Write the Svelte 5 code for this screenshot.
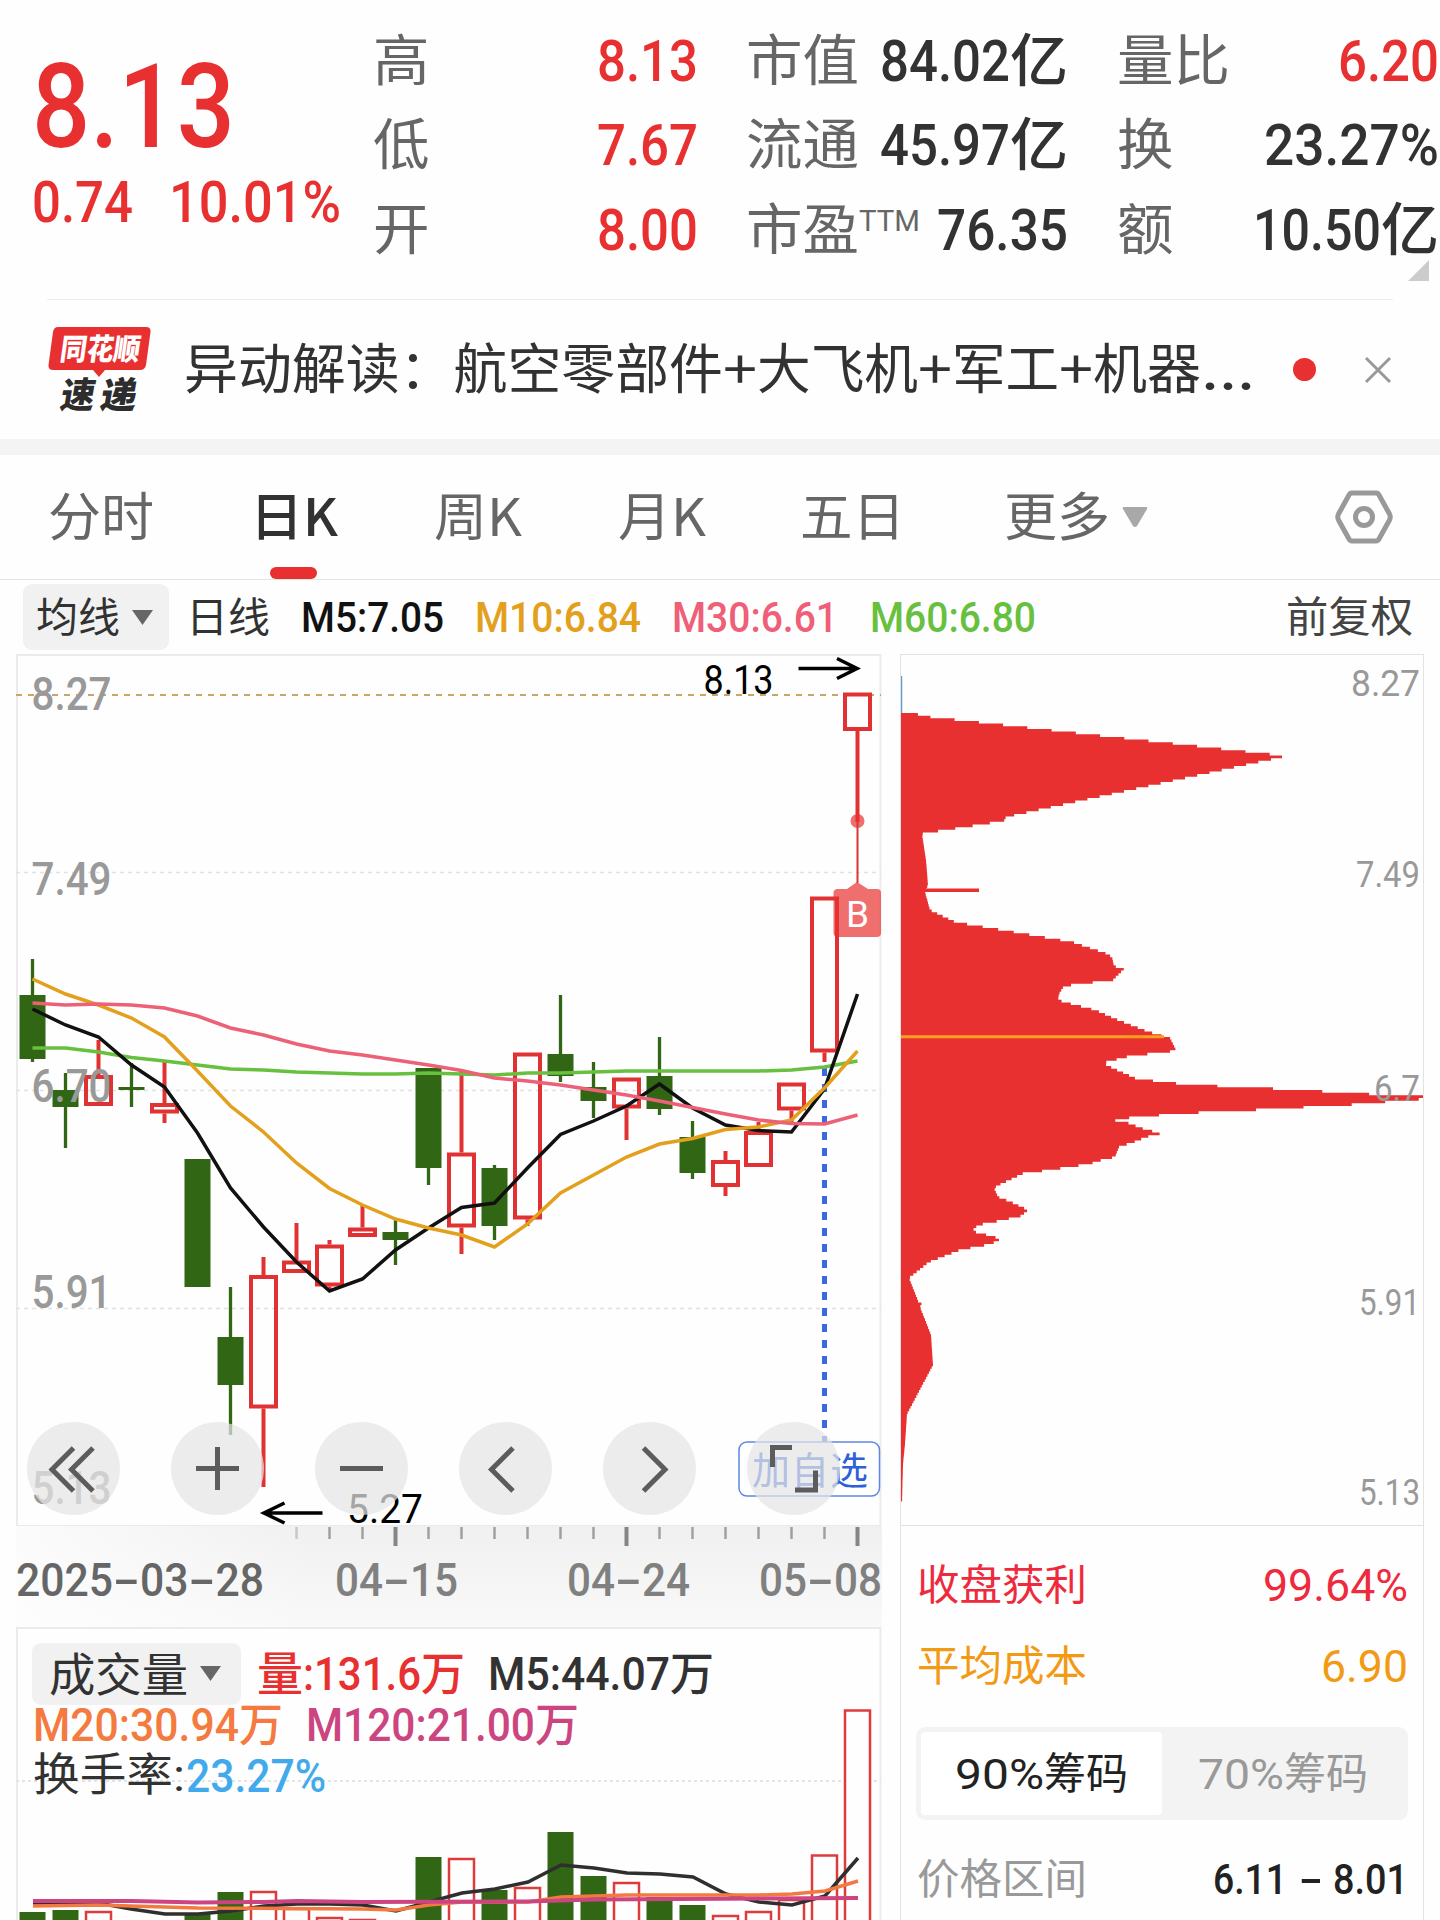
<script lang="ts">
	type Run = [text: string, width: number];
	type Candle = { up: boolean; high: number; top: number; bottom: number; low: number };

	const stats: { label: string; note?: string; value: Run[]; tone?: string }[][] = [
		[
			{ label: '高', value: [['8.13', 101]], tone: 'up' },
			{ label: '低', value: [['7.67', 101]], tone: 'up' },
			{ label: '开', value: [['8.00', 101]], tone: 'up' },
		],
		[
			{ label: '市值', value: [['84.02', 130], ['亿', 58]] },
			{ label: '流通', value: [['45.97', 130], ['亿', 58]] },
			{ label: '市盈', note: 'TTM', value: [['76.35', 131]] },
		],
		[
			{ label: '量比', value: [['6.20', 101]], tone: 'up' },
			{ label: '换', value: [['23.27%', 175]] },
			{ label: '额', value: [['10.50', 128], ['亿', 58]] },
		],
	];

	const headline: Run[] = [
		['异动解读：航空零部件', 539],
		['+', 34],
		['大飞机', 161],
		['+', 34],
		['军工', 107],
		['+', 34],
		['机器', 108],
		['...', 54],
	];

	const tabs: { runs: Run[]; gap: number }[] = [
		{ runs: [['分时', 106]], gap: 0 },
		{ runs: [['日', 53], ['K', 35]], gap: 96 },
		{ runs: [['周', 53], ['K', 35]], gap: 96 },
		{ runs: [['月', 53], ['K', 35]], gap: 96 },
		{ runs: [['五日', 105]], gap: 94 },
		{ runs: [['更多', 106]], gap: 99 },
	];

	let activeTab = $state(1);
	let chipRange = $state(90);

	// candle geometry, in screen units
	const X0 = 32.5;
	const STEP = 33;
	const cx = (i: number) => X0 + i * STEP;

	const c = (up: number, high: number, top: number, bottom: number, low: number): Candle => ({
		up: up === 1,
		high,
		top,
		bottom,
		low,
	});
	const candles: Candle[] = [
		c(0, 959, 995, 1059, 1062),
		c(0, 1073, 1090, 1107, 1148),
		c(1, 1040, 1075, 1106, 1106),
		c(0, 1063, 1087, 1090, 1107),
		c(1, 1062, 1103, 1113.5, 1123),
		c(0, 1159, 1159, 1287, 1287),
		c(0, 1287, 1337, 1385, 1435),
		c(1, 1257, 1275, 1408.5, 1487),
		c(1, 1223, 1260.5, 1273, 1273),
		c(1, 1240, 1244.5, 1286.5, 1290),
		c(1, 1205, 1227.5, 1237, 1237),
		c(0, 1220, 1232, 1240, 1265),
		c(0, 1068, 1068, 1168, 1185),
		c(1, 1070, 1152.5, 1227.5, 1254),
		c(0, 1165, 1168, 1226, 1240),
		c(1, 1052.5, 1052.5, 1219.5, 1226),
		c(0, 995, 1054, 1076, 1082),
		c(0, 1062, 1087, 1101, 1118),
		c(1, 1077.5, 1077.5, 1108.5, 1140),
		c(0, 1037, 1076, 1109, 1115),
		c(0, 1121, 1137, 1173, 1179),
		c(1, 1151, 1160, 1187, 1196),
		c(1, 1122, 1131, 1167, 1167),
		c(1, 1082.5, 1082.5, 1110.5, 1122),
		c(1, 896.5, 896.5, 1052.5, 1062),
		c(1, 692.5, 692.5, 731, 822),
	];

	const averages = [
		{ cls: 'ma60', ys: [1048, 1048, 1052, 1057.5, 1061, 1065, 1069, 1070, 1072, 1073, 1074, 1074, 1073, 1074, 1075, 1073, 1073, 1072, 1071, 1071, 1071, 1071, 1071, 1070, 1067, 1061] },
		{ cls: 'ma5', ys: [1009, 1025, 1037, 1065, 1087, 1133, 1188, 1227, 1262, 1291, 1279, 1250, 1228, 1207.5, 1203, 1168, 1134.5, 1121, 1106, 1084, 1108, 1125, 1130.5, 1132, 1089, 994] },
		{ cls: 'ma10', ys: [979, 994, 1005, 1018, 1037, 1071, 1106, 1132, 1163, 1188.5, 1205, 1219, 1228, 1235, 1247, 1224, 1193, 1175, 1157, 1144, 1138.5, 1129.5, 1127, 1120, 1088, 1051] },
		{ cls: 'ma30', ys: [1003, 1005, 1004, 1005, 1008, 1016, 1028, 1035, 1044, 1051, 1055, 1060, 1065, 1070.5, 1078, 1081, 1085, 1090, 1095, 1101, 1107.5, 1114, 1120, 1123.5, 1124, 1115] },
	];
	const polyline = (ys: number[]) => ys.map((y, i) => `${cx(i)},${y}`).join(' ');

	const priceLabels = [
		{ text: '8.27', y: 710 },
		{ text: '7.49', y: 895 },
		{ text: '6.70', y: 1102 },
		{ text: '5.91', y: 1308 },
		{ text: '5.13', y: 1504 },
	];

	const buttonX = [73.5, 217.5, 361.5, 505.5, 649.5, 793.5];

	// volume bars: top edge, 0 when the bar is below the visible area
	const volumes: [up: number, top: number][] = [
		[0, 1912], [0, 1910], [1, 1912], [0, 0], [0, 0], [0, 1914], [0, 1892], [1, 1892], [1, 1909],
		[1, 1918], [1, 1920], [0, 0], [0, 1857], [1, 1859], [0, 1890], [1, 1888], [0, 1832], [0, 1876],
		[1, 1883], [0, 1897], [0, 1905], [1, 1916], [1, 1912], [1, 1900], [1, 1855.5], [1, 1710.5],
	];
	const volumeLines = [
		{ cls: 'vol5', points: '33,1903 98,1903 131,1909 165,1914 198,1914 231,1911 264,1906 297,1904 330,1904 363,1905 396,1911 429,1902 462,1893 495,1889 528,1882 561,1865 594,1868 627,1873 660,1874 693,1877 726,1894 759,1902 792,1905 825,1896 858,1858' },
		{ cls: 'vol20', points: '33,1906 98,1905 198,1908 363,1909 396,1910 429,1905 462,1902 528,1902 561,1897 627,1895 759,1895 792,1894 825,1891 858,1881' },
		{ cls: 'vol120', points: '33,1901 132,1901 198,1902.5 264,1902 297,1901 363,1902 528,1901.5 594,1899.5 858,1898' },
	];

	// chip distribution outline as [y, x]
	const chips = [
		[713, 902], [715, 926], [716.5, 926], [755.5, 1282], [757.5, 1282], [760, 1268], [817, 1006], [821, 1004], [833, 926], [834, 922],
		[860, 926], [885, 928], [892, 925], [910, 930], [922, 955], [942, 1072], [948, 1090],
		[953, 1105], [957, 1112], [966, 1114], [969, 1124], [974, 1119], [980, 1113], [986, 1064],
		[994, 1059], [1000, 1058], [1003, 1068], [1010, 1095], [1020, 1118], [1032, 1149],
		[1038, 1170], [1050, 1176], [1052, 1168], [1056, 1130], [1063, 1103], [1066, 1108],
		[1079, 1137], [1082, 1165], [1084.5, 1185], [1087, 1238], [1089.5, 1290], [1092, 1334],
		[1094.5, 1378], [1096, 1423], [1098.5, 1423], [1100, 1415], [1102.5, 1377], [1105.5, 1341], [1108, 1288],
		[1111, 1238], [1113, 1188], [1116, 1149], [1118, 1128], [1121, 1113], [1123, 1128],
		[1129, 1144], [1133.5, 1161], [1137, 1146], [1141, 1137], [1147, 1119], [1157, 1115],
		[1161, 1098], [1164, 1090], [1171, 1042], [1173, 1024], [1184, 1001], [1188, 994],
		[1197, 998], [1202, 1011], [1210, 1028], [1216, 1021], [1221, 999], [1225, 978], [1231, 972],
		[1236, 991], [1239, 1001], [1244, 991], [1250, 960], [1262, 929], [1278, 909], [1302, 918.5],
		[1304, 922], [1307, 920], [1335, 931], [1365, 933], [1414, 907], [1444, 905], [1464, 903],
		[1503, 902],
	];
	const chipAt = (y: number) => {
		const i = chips.findIndex((p) => p[0] >= y);
		if (i <= 0) return chips[0][1];
		const [y0, x0] = chips[i - 1];
		const [y1, x1] = chips[i];
		return x0 + ((x1 - x0) * (y - y0)) / (y1 - y0);
	};
	const TICK = 2.655;
	let chipPath = 'M900.5 713';
	for (let y = 713; y < 1500; y += TICK) {
		chipPath += `H${chipAt(y + TICK / 2).toFixed(1)}v${TICK}`;
	}
	chipPath += 'H900.5Z';

	const chipLabels: [text: string, y: number, width: number][] = [
		['8.27', 695.5, 69],
		['7.49', 886.5, 64],
		['6.7', 1100.5, 46],
		['5.91', 1314.5, 61],
		['5.13', 1505, 61],
	];

	const total = (runs: Run[]) => runs.reduce((sum, r) => sum + r[1], 0);
	const place = (runs: Run[]) => {
		let x = 0;
		return runs.map(([text, width]) => {
			const at = x;
			x += width;
			return { text, width, x: at };
		});
	};
</script>

<!-- one line of text whose runs are condensed to the given widths -->
{#snippet fit(runs: Run[], size: number)}
	<svg class="fit" width={total(runs)} height={size} font-size={size}>
		<text y={size * 0.86}>{#each place(runs) as r}<tspan x={r.x} textLength={r.width} lengthAdjust="spacingAndGlyphs">{r.text}</tspan>{/each}</text>
	</svg>
{/snippet}

<div class="screen">
	<header class="quote">
		<div class="price din">
			{@render fit([['8.13', 203]], 117)}
			<div class="change">
				{@render fit([['0.74', 101]], 57)}
				{@render fit([['10.01%', 172]], 57)}
			</div>
		</div>
		{#each stats as column}
			<div class="column">
				{#each column as item}
					<div class="stat">
						<span class="stat-label">
							{@render fit([[item.label, item.label.length * 56.5]], 55)}
							{#if item.note}
								<span class="note">{@render fit([[item.note, 61]], 29)}</span>
							{/if}
						</span>
						<span class="din {item.tone ?? 'plain'}">{@render fit(item.value, 57)}</span>
					</div>
				{/each}
			</div>
		{/each}
		<svg class="corner" width="22" height="21"><path d="M0 21 21 0V21Z" /></svg>
	</header>

	<section class="news">
		<svg class="logo" width="104" height="86" viewBox="48 327 104 86">
			<path class="logo-bubble" d="M58 327H146Q151 327 150.500 332L146 365Q145 370 140 370H105L99 377L93 370H53Q48 370 48.500 365L53 332Q54 327 58 327Z" />
			<text class="logo-name" transform="translate(59 360) skewX(-8)" textLength="80" lengthAdjust="spacingAndGlyphs">同花顺</text>
			<text class="logo-word" transform="translate(59 408) skewX(-10)" textLength="34" lengthAdjust="spacingAndGlyphs">速</text>
			<text class="logo-word" transform="translate(99 408) skewX(-10)" textLength="36" lengthAdjust="spacingAndGlyphs">递</text>
		</svg>
		<div class="headline">{@render fit(headline, 54)}</div>
		<span class="unread"></span>
		<svg class="close" width="28" height="28"><path d="M2 2 26 26M26 2 2 26" /></svg>
	</section>

	<nav class="tabs">
		{#each tabs as tab, i}
			<button
				type="button"
				class="tab"
				class:active={i === activeTab}
				style:margin-left="{tab.gap}px"
				onclick={() => (activeTab = i)}
			>
				{@render fit(tab.runs, 52)}
			</button>
		{/each}
		<svg class="caret" width="26" height="22"><path d="M2 1H24Q26 1 25 3L15 20Q13 22 11 20L1 3Q0 1 2 1Z" /></svg>
		<svg class="settings" width="58" height="54" viewBox="0 0 58 54">
			<path d="M17 3H41Q43 3 44 5L54.500 24Q56 27 54.500 30L44 49Q43 51 41 51H17Q15 51 14 49L3.500 30Q2 27 3.500 24L14 5Q15 3 17 3Z" />
			<circle cx="29" cy="27" r="8.500" />
		</svg>
	</nav>

	<div class="legend">
		<span class="chip">
			{@render fit([['均线', 84]], 41)}
			<svg class="chip-caret" width="21" height="15"><path d="M0 0H21L10.500 15Z" /></svg>
		</span>
		<span class="period">{@render fit([['日线', 84]], 41)}</span>
		<span class="din m5">{@render fit([['M5:7.05', 143]], 42)}</span>
		<span class="din m10">{@render fit([['M10:6.84', 166]], 42)}</span>
		<span class="din m30">{@render fit([['M30:6.61', 166]], 42)}</span>
		<span class="din m60">{@render fit([['M60:6.80', 166]], 42)}</span>
		<span class="adjust">{@render fit([['前复权', 127]], 42)}</span>
	</div>

	<main class="charts">
		<div class="left">
			<svg class="kline" width="866" height="872" viewBox="16 654 866 872">
				<rect class="frame" x="17" y="655" width="863.500" height="871" />
				<path class="grid" d="M16 872.500H881M16 1090.500H881M16 1308.500H881" />
				<path class="last-price" d="M16 695H881" />
				<path class="added" d="M824.500 1068V1442" />
				<rect class="added-box" x="739" y="1442" width="140.500" height="54" rx="8" />
				<text class="added-text" x="752" y="1483.500" textLength="116">加自选</text>

				{#each candles as k, i}
					{#if k.up}
						<path class="wick up" d="M{cx(i)} {k.high}V{k.top}M{cx(i)} {k.bottom}V{k.low}" />
						<rect class="body up" x={cx(i) - 12.5} y={k.top + 2} width="25" height={k.bottom - k.top - 4} />
					{:else}
						<path class="wick down" d="M{cx(i)} {k.high}V{k.low}" />
						<rect class="body down" x={cx(i) - 13} y={k.top} width="26" height={k.bottom - k.top} />
					{/if}
				{/each}
				{#each averages as line}
					<polyline class="line {line.cls}" points={polyline(line.ys)} />
				{/each}

				<circle class="trade" cx="857.500" cy="821" r="7" />
				<path class="trade-stem" d="M857.500 821V883" />
				<path class="trade" d="M838 889H847L857 882L868 889H877Q881 889 881 893V933Q881 937 877 937H838Q833.500 937 833.500 933V893Q833.500 889 838 889Z" />
				<text class="trade-text" x="857.500" y="927" text-anchor="middle">B</text>

				{#each priceLabels as label}
					<text class="price-label" x="31.500" y={label.y} textLength="80" lengthAdjust="spacingAndGlyphs">{label.text}</text>
				{/each}
				<text class="extreme" x="703.500" y="694" textLength="70" lengthAdjust="spacingAndGlyphs">8.13</text>
				<path class="arrow" d="M798.500 668.500H857M837 658.500 857 668.500 837 678.500" />
				<text class="extreme" x="347" y="1523" textLength="76" lengthAdjust="spacingAndGlyphs">5.27</text>
				<path class="arrow" d="M322.500 1513H264M284.500 1503 264 1513 284.500 1523" />

				{#each buttonX as x}
					<circle class="tool" cx={x} cy="1468.500" r="46.500" />
				{/each}
				<path
					class="tool-icon"
					d="M73.500 1448 52 1469.500 73.500 1491M93 1448 71.500 1469.500 93 1491M196 1468.500H239M217.500 1447V1490M340 1468.500H383M513 1448 491.500 1469.500 513 1491M643.500 1448 665 1469.500 643.500 1491M792 1447.500H772.500V1467M795 1490H815.500V1470.500"
				/>
			</svg>

			<div class="axis din">
				<svg class="ticks" width="866" height="20" viewBox="16 1526 866 20">
					{#each candles as _, i}
						{#if i === 11 || i === 18 || i === 25}
							<path class="tick major" d="M{cx(i)} 1527V1546" />
						{:else if i > 7}
							<path class="tick" class:faint={i === 8} d="M{cx(i)} 1527V1539" />
						{/if}
					{/each}
				</svg>
				<div class="dates">
					<span class="date first">{@render fit([['2025', 97], ['-', 27], ['03', 48.5], ['-', 27], ['28', 48.5]], 46)}</span>
					<span class="date">{@render fit([['04', 48], ['-', 27], ['15', 48]], 46)}</span>
					<span class="date">{@render fit([['04', 48], ['-', 27], ['24', 48]], 46)}</span>
					<span class="date">{@render fit([['05', 48], ['-', 27], ['08', 48]], 46)}</span>
				</div>
			</div>

			<div class="volume">
				<svg class="volume-chart" width="866" height="293" viewBox="16 1627 866 293">
					<rect class="frame" x="17" y="1628" width="863.500" height="400" />
					<path class="volume-grid" d="M16 1781H881" />
					{#each volumes as [up, top], i}
						{#if top && up}
							<rect class="volume-bar up" x={cx(i) - 12.5} y={top} width="25" height="260" />
						{:else if top}
							<rect class="volume-bar down" x={cx(i) - 13} y={top} width="26" height="260" />
						{/if}
					{/each}
					{#each volumeLines as line}
						<polyline class="line {line.cls}" points={line.points} />
					{/each}
				</svg>
				<div class="volume-legend din">
					<div class="volume-row">
						<span class="chip big">
							{@render fit([['成交量', 139]], 46)}
							<svg class="chip-caret" width="21" height="15"><path d="M0 0H21L10.500 15Z" /></svg>
						</span>
						<span class="up">{@render fit([['量', 46], [':131.6', 118], ['万', 44]], 46)}</span>
						<span class="plain">{@render fit([['M5:44.07', 182], ['万', 44]], 46)}</span>
					</div>
					<div class="volume-row second">
						<span class="v20">{@render fit([['M20:30.94', 206], ['万', 44]], 46)}</span>
						<span class="v120">{@render fit([['M120:21.00', 229], ['万', 44]], 46)}</span>
					</div>
					<div class="volume-row">
						<span class="plain turnover">{@render fit([['换手率', 140], [':', 12]], 45)}</span>
						<span class="rate">{@render fit([['23.27%', 140]], 46)}</span>
					</div>
				</div>
			</div>
		</div>

		<aside class="right">
			<svg class="distribution" width="523" height="870" viewBox="901 655 523 870">
				<path class="above" d="M901.500 676V713" />
				<path class="profit" d={chipPath} />
				<rect class="profit" x="900.500" y="888.500" width="78.500" height="3.500" />
				<path class="cost" d="M900.500 1036.800H1164" />
				{#each chipLabels as [text, y, width]}
					<text class="chip-label" x={1420 - width} {y} textLength={width} lengthAdjust="spacingAndGlyphs">{text}</text>
				{/each}
			</svg>
			<div class="facts">
				<div class="fact gain">
					{@render fit([['收盘获利', 170]], 42)}
					{@render fit([['99.64%', 145]], 45)}
				</div>
				<div class="fact average">
					{@render fit([['平均成本', 170]], 42)}
					{@render fit([['6.90', 87]], 45)}
				</div>
				<div class="switch">
					<button type="button" class="option" class:chosen={chipRange === 90} onclick={() => (chipRange = 90)}>
						{@render fit([['90%', 89], ['筹码', 84]], 43)}
					</button>
					<button type="button" class="option" class:chosen={chipRange === 70} onclick={() => (chipRange = 70)}>
						{@render fit([['70%', 86], ['筹码', 84]], 43)}
					</button>
				</div>
				<div class="fact range">
					{@render fit([['价格区间', 170]], 42)}
					<span class="din">{@render fit([['6.11', 74], [' ', 12], ['-', 24], [' ', 10], ['8.01', 75]], 42)}</span>
				</div>
			</div>
		</aside>
	</main>
</div>

<style>
	:global(body) {
		margin: 0;
		background: #fefefe;
	}
	.screen {
		width: 1440px;
		height: 1920px;
		overflow: hidden;
		background: #fefefe;
		color: #323232;
		font-family: Roboto, 'Noto Sans CJK SC', sans-serif;
	}
	svg {
		display: block;
		flex: none;
	}
	button {
		padding: 0;
		border: 0;
		background: none;
		color: inherit;
		font: inherit;
	}
	.fit {
		overflow: visible;
		fill: currentColor;
		white-space: pre;
	}
	.din {
		font-weight: 500;
	}
	.up {
		color: #e83030;
	}
	.plain {
		color: #323232;
	}

	.quote {
		position: relative;
		display: flex;
		box-sizing: border-box;
		height: 300px;
	}
	.quote::after {
		content: '';
		position: absolute;
		left: 47px;
		right: 47px;
		bottom: 0;
		height: 1px;
		background: #ececec;
	}
	.price {
		width: 341px;
		padding: 46px 0 0 32px;
		color: #e83030;
	}
	.change {
		display: flex;
		gap: 36px;
		margin-top: 10px;
	}
	.column {
		width: 325px;
		padding-top: 18px;
		margin-right: 48px;
	}
	.column:nth-child(3) {
		width: 322px;
		margin-right: 49px;
	}
	.column:nth-child(4) {
		width: 322px;
		margin-right: 0;
	}
	.stat {
		display: flex;
		align-items: center;
		justify-content: space-between;
		height: 84.5px;
	}
	.stat-label {
		display: flex;
		color: #666;
	}
	.note {
		padding-top: 4px;
	}
	.corner {
		position: absolute;
		right: 10px;
		bottom: 19px;
		fill: #ccc;
	}

	.news {
		display: flex;
		align-items: center;
		height: 139px;
		padding-left: 48px;
		border-bottom: 16px solid #f4f4f4;
	}
	.logo-bubble {
		fill: #e83030;
	}
	.logo-name {
		fill: #fff;
		font-size: 30px;
		font-weight: 900;
	}
	.logo-word {
		fill: #2d2d2d;
		font-size: 36px;
		font-weight: 900;
	}
	.headline {
		margin-left: 32px;
		font-family: 'Noto Sans CJK SC', sans-serif;
	}
	.unread {
		width: 23px;
		height: 23px;
		margin-left: 38px;
		border-radius: 50%;
		background: #e83030;
	}
	.close {
		margin-left: 48px;
		fill: none;
		stroke: #999;
		stroke-width: 3;
	}

	.tabs {
		display: flex;
		align-items: center;
		height: 124px;
		padding-left: 48px;
		border-bottom: 1px solid #e4e4e4;
		color: #666;
		font-family: 'Noto Sans CJK SC', sans-serif;
	}
	.tab {
		position: relative;
		display: flex;
		align-items: center;
		height: 124px;
	}
	.tab.active {
		color: #323232;
		font-weight: 500;
	}
	.tab.active::after {
		content: '';
		position: absolute;
		left: 20px;
		bottom: 0;
		width: 47px;
		height: 12px;
		border-radius: 6px;
		background: #e83030;
	}
	.caret {
		margin-left: 12px;
		fill: #a8a8a8;
	}
	.settings {
		margin-left: 187px;
		fill: none;
		stroke: #999;
		stroke-width: 5;
	}

	.legend {
		display: flex;
		align-items: center;
		height: 74px;
		padding-left: 23px;
	}
	.chip {
		display: flex;
		align-items: center;
		box-sizing: border-box;
		width: 146px;
		height: 66px;
		padding-left: 13px;
		border-radius: 9px;
		background: #f1f1f1;
		color: #323232;
		font-weight: 400;
	}
	.chip-caret {
		margin-left: 12px;
		fill: #666;
	}
	.period {
		margin-left: 17px;
	}
	.m5 {
		margin-left: 31px;
		color: #111;
	}
	.m10 {
		margin-left: 31px;
		color: #e2a01c;
	}
	.m30 {
		margin-left: 31px;
		color: #ef5f78;
	}
	.m60 {
		margin-left: 32px;
		color: #68c03f;
	}
	.adjust {
		margin-left: 250px;
		color: #444;
	}

	.charts {
		display: flex;
		gap: 18px;
		padding-left: 16px;
	}
	.left {
		width: 866px;
	}
	.frame {
		fill: none;
		stroke: #ebebeb;
		stroke-width: 2;
	}
	.grid {
		fill: none;
		stroke: #e2e2e2;
		stroke-width: 1.5;
		stroke-dasharray: 4 4;
	}
	.last-price {
		stroke: #cba467;
		stroke-width: 2;
		stroke-dasharray: 6 6;
	}
	.added {
		stroke: #3c68e4;
		stroke-width: 5;
		stroke-dasharray: 8 8;
	}
	.added-box {
		fill: #fff;
		stroke: #5f86e6;
		stroke-width: 1.5;
	}
	.added-text {
		fill: #2f60d8;
		font-size: 38px;
	}
	.wick {
		fill: none;
		stroke-width: 4;
	}
	.wick.up {
		stroke: #e03232;
	}
	.wick.down {
		stroke: #306614;
		stroke-width: 3.3;
	}
	.body.up {
		fill: none;
		stroke: #e03232;
		stroke-width: 4;
	}
	.body.down {
		fill: #306614;
	}
	.line {
		fill: none;
		stroke-width: 3.5;
	}
	.ma5 {
		stroke: #111;
	}
	.ma10 {
		stroke: #e2a01c;
	}
	.ma30 {
		stroke: #ec6078;
	}
	.ma60 {
		stroke: #68c03f;
	}
	.trade {
		fill: #e83030;
		fill-opacity: 0.7;
	}
	.trade-stem {
		stroke: #dc3535;
		stroke-width: 2;
	}
	.trade-text {
		fill: #fff;
		font-size: 37px;
	}
	.price-label {
		fill: #999;
		font-size: 47px;
		font-weight: 500;
	}
	.extreme {
		fill: #000;
		font-size: 41px;
	}
	.arrow {
		fill: none;
		stroke: #000;
		stroke-width: 3.6;
	}
	.tool {
		fill: #e4e4e4;
		fill-opacity: 0.72;
	}
	.tool-icon {
		fill: none;
		stroke: #5c5c5c;
		stroke-width: 5;
	}

	.axis {
		height: 101px;
		background:
			linear-gradient(90deg, rgba(254, 254, 254, 0.8), rgba(254, 254, 254, 0) 35%),
			linear-gradient(#f0f0f0, #f9f9f9);
		color: #808080;
	}
	.tick {
		stroke: #a0a0a0;
		stroke-width: 2.5;
	}
	.tick.faint {
		opacity: 0.5;
	}
	.tick.major {
		stroke: #858585;
		stroke-width: 4;
	}
	.dates {
		display: flex;
		padding-top: 10px;
	}
	.date {
		margin-left: 109px;
	}
	.date.first {
		margin: 0 -38px 0 0;
		color: #666;
	}
	.date:last-child {
		margin-left: 69px;
	}

	.volume {
		display: grid;
		height: 293px;
	}
	.volume > * {
		grid-area: 1 / 1;
	}
	.volume-grid {
		stroke: #e4e4e4;
		stroke-width: 2;
		stroke-dasharray: 3 3;
	}
	.volume-bar.up {
		fill: #fefefe;
		stroke: #dd3c3c;
		stroke-width: 2.5;
	}
	.volume-bar.down {
		fill: #306614;
	}
	.vol5 {
		stroke: #2f2f2f;
	}
	.vol20 {
		stroke: #f27a40;
	}
	.vol120 {
		stroke: #cc4580;
		stroke-width: 4;
	}
	.volume-legend {
		z-index: 1;
		padding: 20px 0 0 17px;
	}
	.volume-row {
		display: flex;
		align-items: center;
		height: 51px;
	}
	.chip.big {
		width: 209px;
		height: 62px;
		padding-left: 17px;
		margin: 2px 16px 0 -1px;
	}
	.volume-row .up {
		margin-right: 23px;
	}
	.v20 {
		margin-right: 23px;
		color: #f47a40;
	}
	.v120 {
		color: #cc4580;
	}
	.turnover {
		font-weight: 400;
	}
	.rate {
		margin-left: 1px;
		color: #42aaec;
	}

	.right {
		box-sizing: border-box;
		width: 524px;
		height: 1300px;
		border: 1px solid #e2e2e2;
	}
	.distribution {
		border-bottom: 1px solid #e2e2e2;
	}
	.above {
		stroke: #5a9fd8;
		stroke-width: 1.5;
	}
	.profit {
		fill: #e83030;
	}
	.cost {
		stroke: #f7a01c;
		stroke-width: 3;
	}
	.chip-label {
		fill: #999;
		font-size: 37px;
	}
	.facts {
		padding: 18px 15px 0 15px;
	}
	.fact {
		display: flex;
		align-items: center;
		justify-content: space-between;
		height: 81px;
		padding-left: 1px;
	}
	.gain {
		color: #ee2b3d;
	}
	.average {
		color: #f39a14;
	}
	.switch {
		display: flex;
		box-sizing: border-box;
		height: 93px;
		margin: 21px 0 18px;
		padding: 5px;
		border-radius: 9px;
		background: #f3f3f3;
		color: #999;
	}
	.option {
		display: flex;
		flex: 1;
		align-items: center;
		justify-content: center;
		border-radius: 4px;
	}
	.option.chosen {
		background: #fff;
		color: #222;
	}
	.range {
		color: #999;
	}
	.range .din {
		color: #222;
	}
</style>
